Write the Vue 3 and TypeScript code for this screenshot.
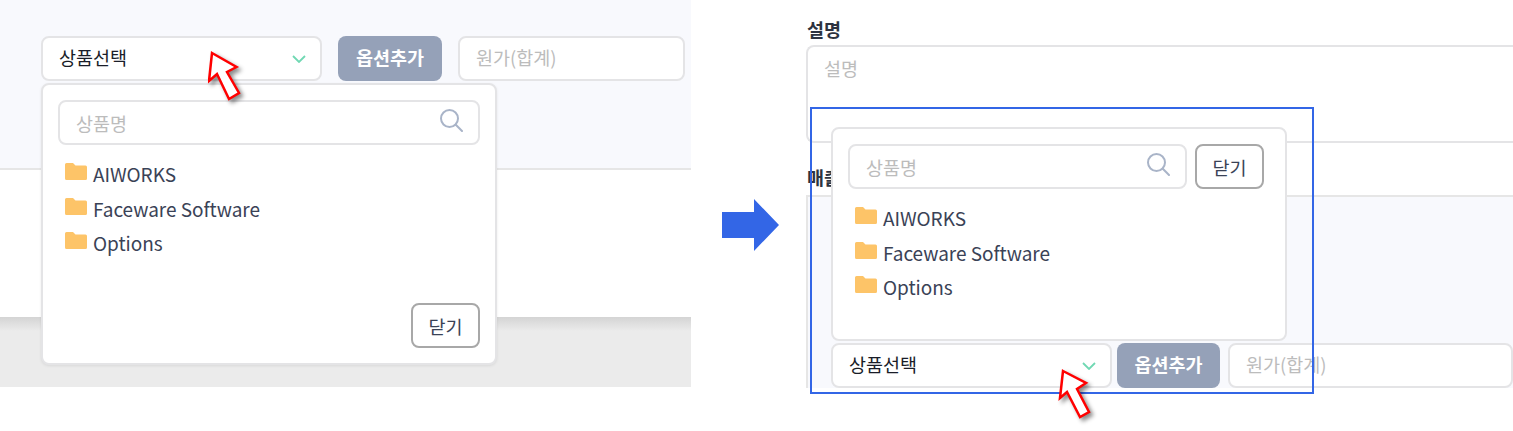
<template>
  <div class="canvas">
    <!-- Before -->
    <section class="shot shot-before">
      <div class="top-band">
        <div class="option-row">
          <div class="select">
            <span>상품선택</span>
            <svg class="chevron" viewBox="0 0 14 8" width="14" height="8">
              <polyline points="1 1 7 7 13 1" />
            </svg>
          </div>
          <button class="btn-add">옵션추가</button>
          <div class="cost">원가(합계)</div>
        </div>
      </div>
      <div class="mid-band" />
      <div class="bottom-band" />

      <div class="dropdown dropdown-before">
        <div class="search-row">
          <div class="search">
            <span>상품명</span>
            <svg class="search-icon" viewBox="0 0 24 24" width="24" height="24">
              <circle cx="10.5" cy="10.5" r="8.5" />
              <line x1="16.8" y1="16.8" x2="23" y2="23" />
            </svg>
          </div>
        </div>
        <ul class="tree">
          <li v-for="name in folders" :key="name">
            <svg class="folder" viewBox="0 0 22 17" width="22" height="17">
              <path d="M0 1.5A1.5 1.5 0 0 1 1.5 0H8l2.5 2.5H20.5A1.5 1.5 0 0 1 22 4V15.5A1.5 1.5 0 0 1 20.5 17H1.5A1.5 1.5 0 0 1 0 15.5Z" />
            </svg>
            <span>{{ name }}</span>
          </li>
        </ul>
        <div class="dropdown-foot">
          <button class="btn-close">닫기</button>
        </div>
      </div>
    </section>

    <!-- Arrow between the two shots -->
    <svg class="next-arrow" viewBox="0 0 57 52" width="57" height="52">
      <polygon points="0 13 32 13 32 0 57 26 32 52 32 39 0 39" />
    </svg>

    <!-- After -->
    <section class="shot shot-after">
      <label class="field-label">설명</label>
      <div class="textarea">설명</div>
      <label class="field-label field-label-2">매출</label>
      <div class="option-box">
        <div class="option-row option-row-after">
          <div class="select">
            <span>상품선택</span>
            <svg class="chevron" viewBox="0 0 14 8" width="14" height="8">
              <polyline points="1 1 7 7 13 1" />
            </svg>
          </div>
          <button class="btn-add">옵션추가</button>
          <div class="cost">원가(합계)</div>
        </div>
      </div>

      <div class="dropdown dropdown-after">
        <div class="search-row">
          <div class="search">
            <span>상품명</span>
            <svg class="search-icon" viewBox="0 0 24 24" width="24" height="24">
              <circle cx="10.5" cy="10.5" r="8.5" />
              <line x1="16.8" y1="16.8" x2="23" y2="23" />
            </svg>
          </div>
          <button class="btn-close">닫기</button>
        </div>
        <ul class="tree">
          <li v-for="name in folders" :key="name">
            <svg class="folder" viewBox="0 0 22 17" width="22" height="17">
              <path d="M0 1.5A1.5 1.5 0 0 1 1.5 0H8l2.5 2.5H20.5A1.5 1.5 0 0 1 22 4V15.5A1.5 1.5 0 0 1 20.5 17H1.5A1.5 1.5 0 0 1 0 15.5Z" />
            </svg>
            <span>{{ name }}</span>
          </li>
        </ul>
      </div>

      <div class="focus-frame" />
    </section>

    <!-- Red callout pointers -->
    <svg class="pointer pointer-a" viewBox="0 0 40 56" width="40" height="56">
      <polygon points="4 2 28.500 16 19 21 31 42 21 48 9 23 1 30" />
    </svg>
    <svg class="pointer pointer-b" viewBox="0 0 40 56" width="40" height="56">
      <polygon points="5 2 28 14 19 20 31 43 22 48 9 23 2 29" />
    </svg>
  </div>
</template>

<script setup lang="ts">
const folders: string[] = ['AIWORKS', 'Faceware Software', 'Options']
</script>

<style>
html,
body {
  margin: 0;
  background: #fff;
}
</style>

<style scoped>
.canvas {
  position: relative;
  width: 1513px;
  height: 431px;
  overflow: hidden;
  background: #fff;
  font-family: 'Noto Sans CJK KR', 'Noto Sans', sans-serif;
  font-size: 18.500px;
  color: #3a4256;
}

.shot {
  position: absolute;
  top: 0;
}

.shot-before {
  left: 0;
  width: 691px;
  height: 387px;
  display: flex;
  flex-direction: column;
}

.shot-after {
  left: 806px;
  width: 707px;
  height: 431px;
}

/* ── Left page bands ── */
.top-band {
  height: 170px;
  box-sizing: border-box;
  padding: 36px 6px 0 41px;
  background: #f8f9fd;
  border-bottom: 2px solid #e6e6e6;
}

.mid-band {
  height: 147px;
  background: #fff;
}

.bottom-band {
  flex: 1;
  background: linear-gradient(#d4d4d4, #ebebeb 14px);
}

/* ── Option row ── */
.option-row {
  display: grid;
  grid-template-columns: 281px 104px 1fr;
  column-gap: 16px;
  height: 45px;
}

.option-row-after {
  grid-template-columns: 281px 103px 1fr;
  column-gap: 5px;
}

.option-row-after .cost {
  margin-left: 3px;
}

.select,
.cost {
  display: flex;
  align-items: center;
  box-sizing: border-box;
  background: #fff;
  border: 2px solid #e4e4e6;
  border-radius: 8px;
}

.select {
  justify-content: space-between;
  padding: 0 14px 0 16px;
  color: #1a1d28;
}

.select span,
.cost,
.btn-add {
  line-height: 1;
  padding-bottom: 3px;
}

.chevron {
  fill: none;
  stroke: #70d8b3;
  stroke-width: 1.800;
}

.btn-add {
  border: 0;
  border-radius: 8px;
  background: #95a1b8;
  color: #fff;
  font: inherit;
  font-weight: 700;
  padding-top: 0;
  padding-left: 0;
  padding-right: 0;
}

.cost {
  padding-left: 16px;
  color: #bcbcbc;
}

/* ── Dropdown ── */
.dropdown {
  position: absolute;
  box-sizing: border-box;
  width: 456px;
  background: #fff;
  border: 2px solid #e4e4e6;
  border-radius: 8px;
  padding: 15px;
  display: flex;
  flex-direction: column;
}

.dropdown-before {
  left: 41px;
  top: 83px;
  height: 282px;
  box-shadow: 0 1px 3px rgba(0, 0, 0, 0.08);
}

.dropdown-after {
  left: 25px;
  top: 127px;
  height: 214px;
}

.dropdown-after .search-row {
  margin-right: 6px;
}

.search-row {
  display: flex;
  gap: 8px;
}

.search {
  flex: 1;
  height: 45px;
  box-sizing: border-box;
  display: flex;
  align-items: center;
  justify-content: space-between;
  padding: 0 15px 0 16px;
  border: 2px solid #e4e4e6;
  border-radius: 8px;
  color: #bcbcbc;
}

.search-icon {
  fill: none;
  stroke: #a9b4c8;
  stroke-width: 2;
  stroke-linecap: round;
  margin-top: -6px;
}

.tree {
  list-style: none;
  margin: 12.500px 0 0 7px;
  padding: 0;
  font-size: 19px;
  letter-spacing: -0.040px;
}

.tree li {
  display: flex;
  align-items: center;
  gap: 6px;
  height: 34.500px;
}

.tree span {
  margin-bottom: 2px;
}

.folder {
  fill: #fdc468;
  margin-top: -6px;
}

.dropdown-foot {
  margin-top: auto;
  display: flex;
  justify-content: flex-end;
}

.btn-close {
  width: 69px;
  height: 45px;
  box-sizing: border-box;
  background: #fff;
  border: 2px solid #a8a8a8;
  border-radius: 8px;
  color: #3a4256;
  font: inherit;
  padding: 0;
}

/* ── Right page form ── */
.field-label {
  position: absolute;
  left: 1px;
  top: 16px;
  line-height: 26px;
  font-weight: 700;
  color: #2d3340;
}

.field-label-2 {
  top: 164px;
}

.textarea {
  position: absolute;
  left: 0;
  right: 0;
  top: 45px;
  height: 98px;
  box-sizing: border-box;
  border: 2px solid #e4e4e6;
  border-radius: 8px 0 0 8px;
  border-right: 0;
  padding: 8px 16px;
  color: #bcbcbc;
}

.option-box {
  position: absolute;
  left: 0;
  right: 0;
  top: 195px;
  height: 193px;
  box-sizing: border-box;
  background: #f8f9fd;
  border: 2px solid #e6e6e6;
  border-width: 2px 0 0 2px;
  padding: 146px 0 0 23px;
}

/* ── Overlays ── */
.focus-frame {
  position: absolute;
  left: 4px;
  top: 107px;
  width: 504px;
  height: 287px;
  box-sizing: border-box;
  border: 2px solid #3366e6;
}

.next-arrow {
  position: absolute;
  left: 722px;
  top: 199px;
  fill: #3366e6;
}

.pointer {
  position: absolute;
  fill: #fff;
  stroke: #f00;
  stroke-width: 2.500;
  filter: drop-shadow(3px 3px 2px rgba(0, 0, 0, 0.45));
}

.pointer-a {
  left: 208px;
  top: 51px;
}

.pointer-b {
  left: 1058px;
  top: 369px;
}
</style>
